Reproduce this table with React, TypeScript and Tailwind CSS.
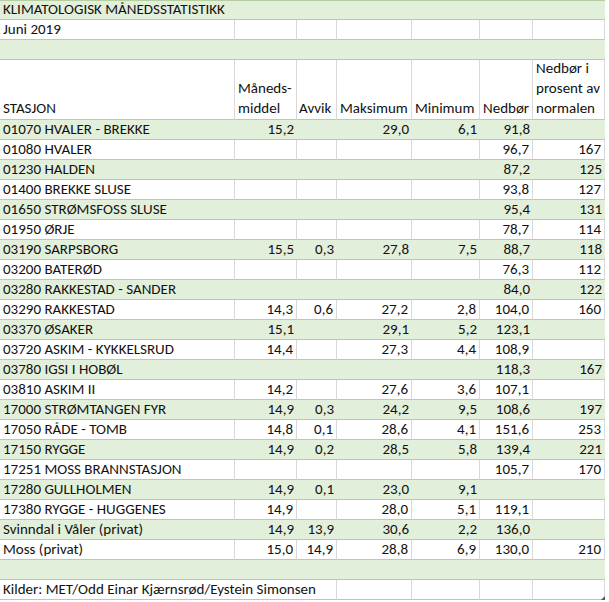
import type { ReactNode } from 'react';

// Column widths taken from the sheet's gridlines (x = 235, 297, 337, 412, 480, 533, 605).
const COLS = 'grid-cols-[235px_62px_40px_75px_68px_53px_72px]';

type Row = [string, string, string, string, string, string, string];

const rows: Row[] = [
  ['01070 HVALER - BREKKE', '15,2', '', '29,0', '6,1', '91,8', ''],
  ['01080 HVALER', '', '', '', '', '96,7', '167'],
  ['01230 HALDEN', '', '', '', '', '87,2', '125'],
  ['01400 BREKKE SLUSE', '', '', '', '', '93,8', '127'],
  ['01650 STRØMSFOSS SLUSE', '', '', '', '', '95,4', '131'],
  ['01950 ØRJE', '', '', '', '', '78,7', '114'],
  ['03190 SARPSBORG', '15,5', '0,3', '27,8', '7,5', '88,7', '118'],
  ['03200 BATERØD', '', '', '', '', '76,3', '112'],
  ['03280 RAKKESTAD - SANDER', '', '', '', '', '84,0', '122'],
  ['03290 RAKKESTAD', '14,3', '0,6', '27,2', '2,8', '104,0', '160'],
  ['03370 ØSAKER', '15,1', '', '29,1', '5,2', '123,1', ''],
  ['03720 ASKIM - KYKKELSRUD', '14,4', '', '27,3', '4,4', '108,9', ''],
  ['03780 IGSI I HOBØL', '', '', '', '', '118,3', '167'],
  ['03810 ASKIM II', '14,2', '', '27,6', '3,6', '107,1', ''],
  ['17000 STRØMTANGEN FYR', '14,9', '0,3', '24,2', '9,5', '108,6', '197'],
  ['17050 RÅDE - TOMB', '14,8', '0,1', '28,6', '4,1', '151,6', '253'],
  ['17150 RYGGE', '14,9', '0,2', '28,5', '5,8', '139,4', '221'],
  ['17251 MOSS BRANNSTASJON', '', '', '', '', '105,7', '170'],
  ['17280 GULLHOLMEN', '14,9', '0,1', '23,0', '9,1', '', ''],
  ['17380 RYGGE - HUGGENES', '14,9', '', '28,0', '5,1', '119,1', ''],
  ['Svinndal i Våler (privat)', '14,9', '13,9', '30,6', '2,2', '136,0', ''],
  ['Moss (privat)', '15,0', '14,9', '28,8', '6,9', '130,0', '210'],
];

function Cell({
  children,
  green,
  right,
}: {
  children?: ReactNode;
  green?: boolean;
  right?: boolean;
}) {
  return (
    <div
      className={[
        'flex h-[20px] items-end overflow-visible whitespace-nowrap border-b border-[#b5cfa1] px-[3px] leading-[19px]',
        green ? 'bg-[#e2efda]' : 'border-r border-r-[#d9d9d9] bg-white',
        right ? 'justify-end' : 'justify-start',
      ].join(' ')}
    >
      {children}
    </div>
  );
}

export default function App() {
  return (
    <div className="relative h-[602px] w-[609px] bg-white text-[15px] text-[#111] [font-family:Carlito,Lato,'Open_Sans',sans-serif]">
      <div className={`grid w-[605px] ${COLS}`}>
        {/* title */}
        <div className="col-span-7 flex h-[20px] items-end border-b border-t border-[#b5cfa1] bg-[#e2efda] px-[3px] leading-[19px]">
          KLIMATOLOGISK MÅNEDSSTATISTIKK
        </div>

        {/* period */}
        <Cell>Juni 2019</Cell>
        {[0, 1, 2, 3, 4, 5].map((i) => (
          <Cell key={i} />
        ))}

        {/* spacer */}
        <div className="col-span-7 h-[20px] border-b border-[#b5cfa1] bg-[#e2efda]" />

        {/* header */}
        {[
          ['STASJON'],
          ['Måneds-', 'middel'],
          ['Avvik'],
          ['Maksimum'],
          ['Minimum'],
          ['Nedbør'],
          ['Nedbør i', 'prosent av', 'normalen'],
        ].map((lines, i) => (
          <div
            key={i}
            className={`flex h-[60px] flex-col justify-end whitespace-nowrap border-b border-r border-b-[#b5cfa1] border-r-[#d9d9d9] bg-white pb-[1px] leading-[20px] ${
              i === 2 ? 'px-[2px]' : 'px-[3px]'
            }`}
          >
            {lines.map((l) => (
              <span key={l}>{l}</span>
            ))}
          </div>
        ))}

        {/* data */}
        {rows.map((row, r) => {
          const green = r % 2 === 0;
          return row.map((v, c) => (
            <Cell key={`${r}-${c}`} green={green} right={c > 0}>
              {v}
            </Cell>
          ));
        })}

        {/* spacer */}
        <div className="col-span-7 h-[20px] border-b border-[#b5cfa1] bg-[#e2efda]" />

        {/* sources */}
        <div className="col-span-3 flex h-[20px] items-end whitespace-nowrap border-b border-r border-b-[#b5cfa1] border-r-[#d9d9d9] px-[3px] leading-[19px]">
          Kilder: MET/Odd Einar Kjærnsrød/Eystein Simonsen
        </div>
        <Cell />
        <Cell />
        <Cell />
        <Cell />
      </div>

      {/* resize grip */}
      <div className="absolute left-[601px] top-[596px] h-0 w-0 border-b-[4px] border-l-[4px] border-b-[#555] border-l-transparent" />
    </div>
  );
}
